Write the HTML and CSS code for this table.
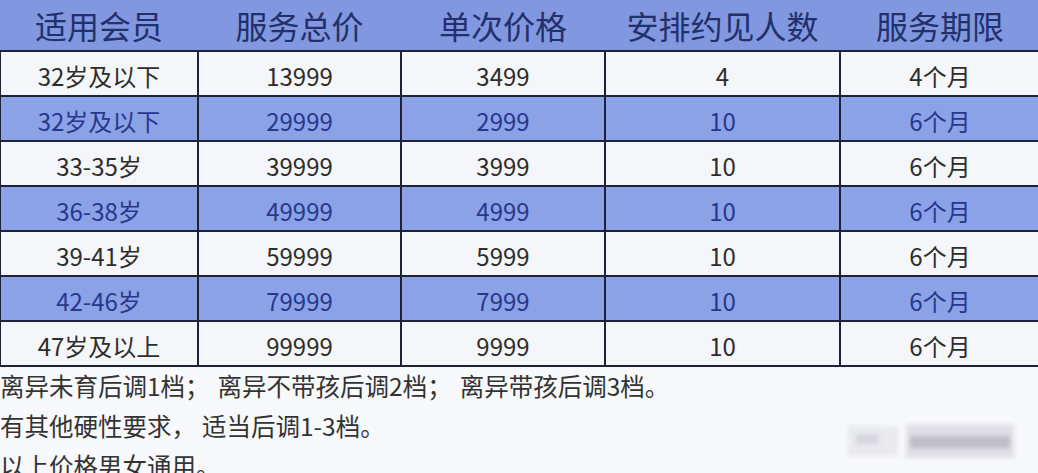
FILE: index.html
```html
<!DOCTYPE html>
<html lang="zh">
<head>
<meta charset="utf-8">
<link rel="stylesheet" href="styles.css">
</head>
<body>
<div class="page">
  <table class="price">
    <colgroup>
      <col class="c1"><col class="c2"><col class="c3"><col class="c4"><col class="c5">
    </colgroup>
    <thead>
      <tr><th>适用会员</th><th>服务总价</th><th>单次价格</th><th>安排约见人数</th><th>服务期限</th></tr>
    </thead>
    <tbody>
      <tr class="w"><td>32岁及以下</td><td>13999</td><td>3499</td><td>4</td><td>4个月</td></tr>
      <tr class="b"><td>32岁及以下</td><td>29999</td><td>2999</td><td>10</td><td>6个月</td></tr>
      <tr class="w"><td>33-35岁</td><td>39999</td><td>3999</td><td>10</td><td>6个月</td></tr>
      <tr class="b"><td>36-38岁</td><td>49999</td><td>4999</td><td>10</td><td>6个月</td></tr>
      <tr class="w"><td>39-41岁</td><td>59999</td><td>5999</td><td>10</td><td>6个月</td></tr>
      <tr class="b"><td>42-46岁</td><td>79999</td><td>7999</td><td>10</td><td>6个月</td></tr>
      <tr class="w"><td>47岁及以上</td><td>99999</td><td>9999</td><td>10</td><td>6个月</td></tr>
    </tbody>
  </table>
  <div class="notes">
    <p>离异未育后调1档<span class="sep">；</span>离异不带孩后调2档<span class="sep">；</span>离异带孩后调3档。</p>
    <p>有其他硬性要求<span class="sep-s">，</span>适当后调1-3档。</p>
    <p>以上价格男女通用。</p>
  </div>
  <div class="mark">
    <span class="m1"></span><span class="m2"></span><span class="m3"></span><span class="m4"></span>
  </div>
</div>
</body>
</html>
```
FILE: styles.css
```css
html, body {
  margin: 0;
  padding: 0;
  background: #f8f9fc;
}
body {
  font-family: "Noto Sans CJK SC", "Noto Sans", sans-serif;
  color: #2b2b2b;
  width: 1038px;
  height: 473px;
  overflow: hidden;
}
.page {
  position: relative;
  width: 1038px;
  height: 473px;
}
.price {
  border-collapse: collapse;
  table-layout: fixed;
  width: 1040px;
  margin-left: -1px;
}
.c1 { width: 198px; }
.c2 { width: 203px; }
.c3 { width: 204px; }
.c4 { width: 235px; }
.c5 { width: 200px; }
.price th {
  background: #8197df;
  color: #22306b;
  font-size: 32px;
  font-weight: 400;
  height: 50px;
  padding: 0;
  line-height: 50px;
  border-bottom: 2px solid #1d2236;
}
.price td {
  height: 39px;
  padding: 4px 0 0;
  font-size: 24px;
  line-height: 39px;
  text-align: center;
  border: 2px solid #1d2236;
}
.price tr.w td {
  background: #f5f6fa;
  color: #2d2d2d;
}
.price tr.b td {
  background: #8ca2e7;
  color: #27388c;
}
.notes {
  margin-top: -1px;
}
.notes p {
  margin: 0;
  font-size: 24.5px;
  line-height: 40px;
  color: #333;
  white-space: nowrap;
}
.sep {
  letter-spacing: 8px;
}
.sep-s {
  letter-spacing: 6px;
}
.mark {
  position: absolute;
  left: 846px;
  top: 422px;
  width: 170px;
  height: 40px;
  filter: blur(2px);
}
.mark span {
  position: absolute;
  display: block;
}
.m1 { left: 2px; top: 4px; width: 50px; height: 30px; background: #e9e9ee; }
.m2 { left: 60px; top: 2px; width: 108px; height: 34px; background: #e0dfe6; }
.m3 { left: 64px; top: 14px; width: 100px; height: 12px; background: #bfbdc8; }
.m4 { left: 10px; top: 12px; width: 22px; height: 10px; background: #d6d6dd; }
```
